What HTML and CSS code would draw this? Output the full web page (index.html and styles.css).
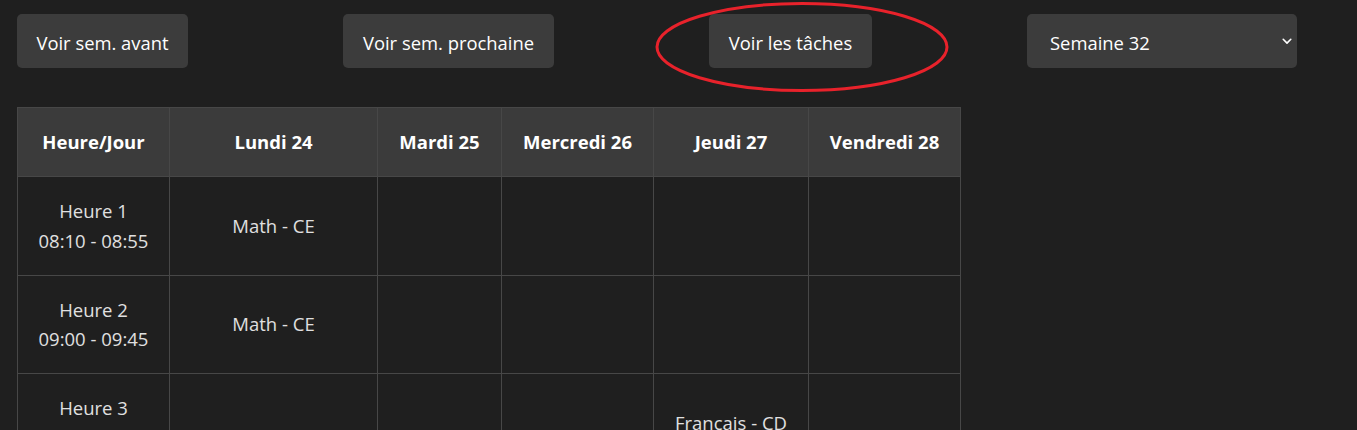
FILE: index.html
```html
<!DOCTYPE html>
<html lang="fr">
<head>
<meta charset="utf-8">
<title>Emploi du temps</title>
<link rel="stylesheet" href="styles.css">
</head>
<body>
<div class="page">
  <div class="toolbar">
    <button class="btn btn-prev">Voir sem. avant</button>
    <button class="btn btn-next">Voir sem. prochaine</button>
    <button class="btn btn-tasks">Voir les tâches</button>
    <div class="select">
      <span>Semaine 32</span>
      <svg class="chev" width="10" height="7" viewBox="0 0 10 7"><path d="M1.2 1.3 L5 5.1 L8.8 1.3" fill="none" stroke="#ffffff" stroke-width="1.6" stroke-linecap="round" stroke-linejoin="round"/></svg>
    </div>
    <svg class="annot" width="300" height="96" viewBox="0 0 300 96"><ellipse cx="147" cy="46" rx="145" ry="43.5" fill="none" stroke="#e8222b" stroke-width="3"/></svg>
  </div>

  <table class="grid">
    <colgroup>
      <col class="c-hour"><col class="c-mon"><col class="c-tue"><col class="c-wed"><col class="c-thu"><col class="c-fri">
    </colgroup>
    <thead>
      <tr>
        <th>Heure/Jour</th>
        <th>Lundi 24</th>
        <th>Mardi 25</th>
        <th>Mercredi 26</th>
        <th>Jeudi 27</th>
        <th>Vendredi 28</th>
      </tr>
    </thead>
    <tbody>
      <tr>
        <td>Heure 1<br>08:10 - 08:55</td>
        <td>Math - CE</td>
        <td></td><td></td><td></td><td></td>
      </tr>
      <tr>
        <td>Heure 2<br>09:00 - 09:45</td>
        <td>Math - CE</td>
        <td></td><td></td><td></td><td></td>
      </tr>
      <tr>
        <td>Heure 3<br>09:50 - 10:35</td>
        <td></td><td></td><td></td>
        <td>Français - CD</td>
        <td></td>
      </tr>
      <tr>
        <td>Heure 4<br>10:40 - 11:25</td>
        <td></td><td></td><td></td><td></td><td></td>
      </tr>
    </tbody>
  </table>
</div>
</body>
</html>
```

FILE: styles.css
```css
* { box-sizing: border-box; }

html, body {
  margin: 0;
  padding: 0;
  background: #1f1f1f;
}

body {
  font-family: "Open Sans", "Noto Sans", "Liberation Sans", sans-serif;
  color: #e2e2e2;
}

.page {
  padding: 14px 0 0 17px;
}

.toolbar {
  position: relative;
  display: flex;
  align-items: center;
  gap: 155px;
  height: 54px;
}

.btn {
  height: 54px;
  padding: 3px 0 0;
  border: none;
  border-radius: 5px;
  background: #3c3c3c;
  color: #ffffff;
  font-family: inherit;
  font-size: 18.4px;
  line-height: 24px;
  text-align: center;
  white-space: nowrap;
}

.btn-prev { width: 171px; }
.btn-next { width: 211px; }
.btn-tasks { width: 163px; }

.select {
  width: 270px;
  height: 54px;
  border-radius: 5px;
  background: #3c3c3c;
  color: #ffffff;
  font-size: 18.4px;
  display: flex;
  align-items: center;
  justify-content: space-between;
  padding: 3px 5px 0 23px;
}

.chev { display: block; margin-top: -3px; }

.annot {
  position: absolute;
  left: 638px;
  top: -13px;
}

.grid {
  margin-top: 39px;
  border-collapse: collapse;
  table-layout: fixed;
  width: 943px;
}

.c-hour { width: 152px; }
.c-mon { width: 208px; }
.c-tue { width: 124px; }
.c-wed { width: 152px; }
.c-thu { width: 155px; }
.c-fri { width: 152px; }

.grid th,
.grid td {
  border: 1px solid #474747;
  text-align: center;
  vertical-align: middle;
  font-size: 18.5px;
  line-height: 29.75px;
  padding: 19px 4px;
  white-space: nowrap;
}

.grid th {
  background: #3b3b3b;
  color: #ffffff;
  font-weight: 700;
  line-height: 30px;
}

.grid td {
  background: #1f1f1f;
  color: #e0e0e0;
  font-weight: 400;
}
```
